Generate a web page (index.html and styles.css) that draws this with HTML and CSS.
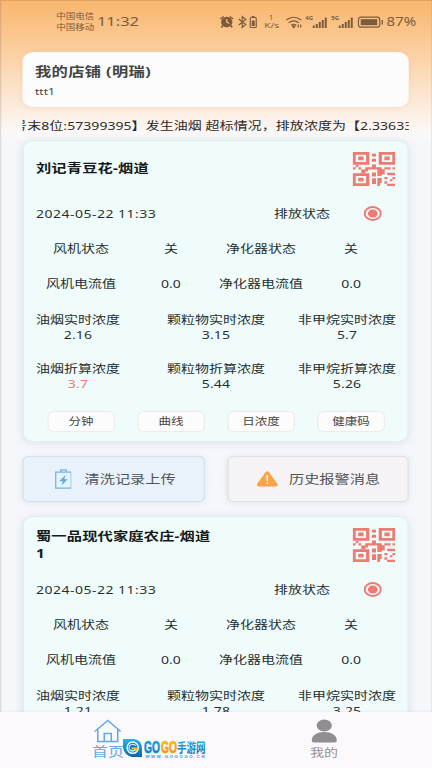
FILE: index.html
```html
<!DOCTYPE html>
<html lang="zh-CN">
<head>
<meta charset="utf-8">
<title>我的店铺</title>
<link rel="stylesheet" href="styles.css">
</head>
<body>
<svg class="defs" width="0" height="0" aria-hidden="true">
  <symbol id="qr" viewBox="0 0 128 101" preserveAspectRatio="none">
    <path fill-rule="evenodd" d="M0 0h50v38H0zM9.500 8v22h31V8zM17 13.500h16v11H17zM78 0h50v38H78zM87.500 8v22h31V8zM95 13.500h16v11H95zM0 63h50v38H0zM9.500 71v22h31V71zM17 76.500h16v11H17z"/>
    <path d="M58 5h12v8H58zM58 20h12v9H58zM58 37h12v8H58zM9 39h9v6H9zM0 45h9v7H0zM18 45h8v7h-8zM38 45h49v7H38zM95 45h18v7H95zM119 45h9v7h-9zM26 52h20v6H26zM26 58h12v5H26zM74 51h13v10H74zM87 51h9v16h-9zM58 61h12v12H58zM74 61h13v10H74zM58 78h12v17H58zM74 77h13v15h-5v9h-8v-7zM103 62h25v7h-25zM95 74h9v7h-9zM119 74h9v7h-9v6h-8v-6h8zM95 87h8v7h-8zM103 94h24v7h-24z"/>
  </symbol>
  <symbol id="radio" viewBox="0 0 18 15" preserveAspectRatio="none">
    <ellipse cx="9" cy="7.5" rx="8.1" ry="6.4" fill="none" stroke="#ee7a70" stroke-width="2"/>
    <ellipse cx="9" cy="7.5" rx="4.9" ry="4"/>
  </symbol>
</svg>

<div class="phone">
  <header class="status">
    <div class="carriers"><span>中国电信</span><span>中国移动</span></div>
    <div class="clock">11:32</div>
    <svg class="indicators" viewBox="0 0 166 18" preserveAspectRatio="none">
      <ellipse cx="8" cy="9" rx="5.7" ry="5.2"/>
      <path d="M1.500 6 5 3.500M11 3.500l3.500 2.500M4 12.500l-1.500 2M12 12.500l1.500 2" class="line"/>
      <path d="M8 6v3l2.500 1.500" class="cut"/>
      <path d="m20 6 7 5.500-3.500 3v-11l3.500 3-7 5.500" class="line thin"/>
      <rect x="31.500" y="4.500" width="6" height="10" rx="1" class="line thin"/>
      <path d="M33 3h3v1.500h-3zM33 7.500h3V13h-3z"/>
      <text x="50" y="7" font-size="8">1</text>
      <text x="45.500" y="15.500" font-size="7.500" textLength="15" lengthAdjust="spacingAndGlyphs">K/s</text>
      <path d="M67.500 7q7.500-5.500 15 0M70 9.700q5-3.800 10 0M72.500 12.200q2.500-1.800 5 0" class="line thin"/>
      <path d="M73.800 13.200h2.400l-1.200 1.600zM79.500 11.500v3M82 11.500v3" class="line thin"/>
      <text x="86.500" y="7" font-size="6" font-weight="700">4G</text>
      <path d="M94 12.500h2V15h-2zM97 11h2v4h-2zM100 9h2v6h-2zM103 7h2v8h-2zM106 4.500h2V15h-2z"/>
      <text x="112.500" y="7" font-size="6" font-weight="700">5G</text>
      <path d="M120 12.500h2V15h-2zM123 11h2v4h-2zM126 9h2v6h-2zM129 7h2v8h-2zM132 4.500h2V15h-2z"/>
      <rect x="139.700" y="4.200" width="21.300" height="10" rx="2.500" class="line thin"/>
      <rect x="142" y="6.200" width="16.500" height="6"/>
      <path d="M162.800 7h1.400v4.500h-1.400z"/>
    </svg>
    <div class="percent">87%</div>
  </header>

  <main class="content">
    <section class="shop">
      <h1>我的店铺 (明瑞)</h1>
      <p>ttt1</p>
    </section>

    <div class="marquee">号末8位:57399395】发生油烟 超标情况，排放浓度为【2.33633</div>

    <article class="card">
      <div class="head"><h2>刘记青豆花-烟道</h2><svg class="qr"><use href="#qr"/></svg></div>
      <div class="row when"><span class="date">2024-05-22 11:33</span><span>排放状态</span><svg class="radio"><use href="#radio"/></svg></div>
      <div class="row quad"><span>风机状态</span><span>关</span><span>净化器状态</span><span>关</span></div>
      <div class="row quad"><span>风机电流值</span><span>0.0</span><span>净化器电流值</span><span>0.0</span></div>
      <div class="triple">
        <div>油烟实时浓度<b>2.16</b></div><div>颗粒物实时浓度<b>3.15</b></div><div>非甲烷实时浓度<b>5.7</b></div>
      </div>
      <div class="triple">
        <div>油烟折算浓度<b class="over">3.7</b></div><div>颗粒物折算浓度<b>5.44</b></div><div>非甲烷折算浓度<b>5.26</b></div>
      </div>
      <div class="buttons"><button>分钟</button><button>曲线</button><button>日浓度</button><button>健康码</button></div>
    </article>

    <div class="links">
      <a class="link upload">
        <svg class="battery" viewBox="0 0 17 20" preserveAspectRatio="none"><path d="M.7 3.200h15.600v16H.7zM5.700 3V.800h5.600V3"/><path class="bolt" d="M10.500 6 4.200 12.300h3.600L6.600 16.500l6-6.200H9.300z"/></svg>
        <span>清洗记录上传</span>
      </a>
      <a class="link history">
        <svg class="warning" viewBox="0 0 22 16" preserveAspectRatio="none"><path d="M9.300 1.200q1.700-1.800 3.400 0l8.400 11.500q1.300 2.600-1.600 2.800h-17Q-.4 15.300.9 12.700z"/><path class="mark" d="M10 4.200h2l-.4 6h-1.200zM10.200 11.500h1.600v1.600h-1.600z"/></svg>
        <span>历史报警消息</span>
      </a>
    </div>

    <article class="card">
      <div class="head"><h2>蜀一品现代家庭农庄-烟道<br>1</h2><svg class="qr"><use href="#qr"/></svg></div>
      <div class="row when"><span class="date">2024-05-22 11:33</span><span>排放状态</span><svg class="radio"><use href="#radio"/></svg></div>
      <div class="row quad"><span>风机状态</span><span>关</span><span>净化器状态</span><span>关</span></div>
      <div class="row quad"><span>风机电流值</span><span>0.0</span><span>净化器电流值</span><span>0.0</span></div>
      <div class="triple">
        <div>油烟实时浓度<b>1.21</b></div><div>颗粒物实时浓度<b>1.78</b></div><div>非甲烷实时浓度<b>3.25</b></div>
      </div>
    </article>
  </main>

  <nav class="tabs">
    <a class="tab active">
      <svg class="house" viewBox="0 0 28 24" preserveAspectRatio="none"><path d="M1 12.500 14 1.500l13 11M4 10.500V22.500h20V10.500M10.500 22v-7.500h7V22"/></svg>
      <span>首页</span>
    </a>
    <a class="tab">
      <svg class="person" viewBox="0 0 26 24" preserveAspectRatio="none"><ellipse cx="13" cy="6.500" rx="7.600" ry="6"/><path d="M.5 21.500C.5 16 6 13 13 13s12.500 3 12.500 8.500q0 2-2 2h-21q-2 0-2-2z"/></svg>
      <span>我的</span>
    </a>
  </nav>
</div>

<svg class="watermark" viewBox="0 0 86 24">
  <defs>
    <linearGradient id="blue" x2="0" y2="1"><stop stop-color="#22b4ea"/><stop offset="1" stop-color="#0768b5"/></linearGradient>
    <linearGradient id="gold" x2="0" y2="1"><stop stop-color="#ffc91b"/><stop offset="1" stop-color="#f47a08"/></linearGradient>
  </defs>
  <path fill="url(#blue)" d="M1 2h11q8 1 8 10v8H10Q2 18 1 10z"/>
  <circle cx="10.700" cy="10.700" r="5.600" fill="#0877bd" stroke="#fff" stroke-width="1.500"/>
  <path d="M14 8.500q-4-2.500-6.500.500-1.500 4 2.500 5 3 0 4-2.500H9.500" fill="none" stroke="#bfeaff" stroke-width="1.300"/>
  <path d="M10 11.300h5l-1.500 3" fill="none" stroke="#ffb41e" stroke-width="1.800"/>
  <g class="brand">
    <text class="go" x="22" y="15.800" font-size="17" textLength="16" lengthAdjust="spacingAndGlyphs" fill="url(#blue)" stroke="#1390d3">GO</text>
    <text class="go" x="39" y="15.800" font-size="17" textLength="16" lengthAdjust="spacingAndGlyphs" fill="url(#gold)" stroke="#fba012">GO</text>
    <text x="55" y="15" font-size="13" textLength="28.500" lengthAdjust="spacingAndGlyphs" fill="url(#blue)">手游网</text>
    <text x="23.500" y="21" font-size="4.300" textLength="59" fill="#2b9ad6">WWW.GOGOGO.CN</text>
  </g>
</svg>
</body>
</html>
```
FILE: styles.css
```css
* { box-sizing: border-box; margin: 0; padding: 0; }

body {
  position: relative;
  width: 432px;
  height: 768px;
  overflow: hidden;
  background: #f6f7fb;
}

.defs { display: block; height: 0; }

/* The handset screen is laid out narrow and widened to the window. */
.phone {
  display: flex;
  flex-direction: column;
  width: 345.6px;
  height: 768px;
  transform: scaleX(1.25);
  transform-origin: 0 0;
  background: linear-gradient(#f9b66e 0, #fbc68e 35px, #fbdcbb 75px, #fcf0e5 115px, #faf9f9 134px, #f6f7fb 142px);
  box-shadow: inset 1px 1px 0 rgba(90, 80, 80, .18), inset -1px -1px 0 rgba(90, 80, 80, .12);
  font: 11.2px/15px "Noto Sans", "Noto Sans CJK SC", sans-serif;
  color: #27302f;
}

.status {
  display: flex;
  align-items: center;
  flex: none;
  height: 43px;
  padding-left: 45px;
  color: #7d5b3b;
}
.carriers { display: flex; flex-direction: column; width: 32.500px; font-size: 7.6px; line-height: 10.5px; }
.clock { width: 97.500px; font-size: 13.2px; }
.indicators { width: 132.8px; height: 18px; fill: #7d5b3b; overflow: visible; }
.indicators .line { fill: none; stroke: #7d5b3b; stroke-width: 1.5; }
.indicators .thin { stroke-width: 1.2; }
.indicators .cut { fill: none; stroke: #f9c58d; stroke-width: 1.2; }
.percent { margin-left: 1.5px; font-size: 12px; }

.content { flex: 1; min-height: 0; overflow: hidden; padding: 9px 18.4px 0; }

.shop {
  height: 55px;
  padding: 10px 9.6px 0;
  border-radius: 9px;
  background: #fcfcfc;
  box-shadow: 0 1px 5px rgba(200, 130, 70, .13);
  color: #454545;
}
.shop h1 { font-size: 13px; line-height: 18px; letter-spacing: .3px; }
.shop p { margin-top: 5px; font-size: 9.6px; line-height: 13px; }

.marquee {
  height: 32.500px;
  padding-top: 11px;
  overflow: hidden;
  white-space: nowrap;
  text-indent: -8.300px;
  letter-spacing: .05px;
  color: #2c2927;
}

.card {
  height: 302px;
  padding: 0 9.4px;
  border: 1px solid #e0eeee;
  border-radius: 9px;
  background: #effcfb;
  box-shadow: 0 1px 8px rgba(90, 110, 140, .16);
}
.head { display: flex; align-items: center; justify-content: space-between; height: 56px; }
.head h2 { font-size: 12.2px; line-height: 17px; letter-spacing: .13px; color: #151b1b; }
.qr { width: 34.4px; height: 34px; margin-right: .8px; fill: #ee7a70; }

.row { height: 35px; padding-bottom: 1.500px; align-items: center; border-top: 1px solid #f6faf8; }
.when { display: flex; }
.date { flex: 1; letter-spacing: .4px; }
.radio { width: 14.4px; height: 15px; margin: 0 11.2px 1.500px 27.2px; fill: #ee7a70; }
.quad { display: grid; grid-template-columns: repeat(4, 1fr); text-align: center; white-space: nowrap; }
.quad span { justify-self: center; }

.triple {
  display: grid;
  grid-template-columns: 1fr auto 1fr;
  height: 49.700px;
  padding-top: 9.200px;
  border-top: 1px solid #f6faf8;
  text-align: center;
}
.triple div:first-child { justify-self: start; }
.triple div:last-child { justify-self: end; }
.triple b { display: block; font-weight: 400; letter-spacing: .15px; }
.triple .over { color: #ee7a70; }

.buttons {
  display: flex;
  justify-content: space-around;
  padding-top: 9px;
  border-top: 1px solid #f6faf8;
}
.buttons button {
  width: 54px;
  height: 21px;
  border: 1px solid #ececec;
  border-radius: 5px;
  background: #fcfcfc;
  font: 10px/18px "Noto Sans", "Noto Sans CJK SC", sans-serif;
  color: #444;
}

.links { display: flex; justify-content: space-between; padding: 14px 0; }
.link {
  display: flex;
  align-items: center;
  width: 145.6px;
  height: 46px;
  padding-left: 24.5px;
  border: 1px solid #d2e3ec;
  border-radius: 5px;
  background: #e9f2fb;
  box-shadow: 0 1px 7px rgba(90, 110, 140, .13);
  font-size: 12.15px;
  color: #505457;
}
.link span { padding-top: 1.500px; }
.battery { width: 13.6px; height: 20px; margin-right: 10.200px; fill: none; stroke: #70b5ed; stroke-width: 1.300; }
.battery .bolt { fill: #58a9ea; stroke: none; }
.history { padding-left: 22.5px; border-color: #e4e0e3; background: #f6f3f6; }
.warning { width: 17.6px; height: 16px; margin-right: 8.5px; fill: #f9a247; }
.warning .mark { fill: #fff; }

.tabs { display: flex; flex: none; height: 56px; background: #fbf9fc; box-shadow: 0 -1px 2px rgba(80, 80, 100, .05); }
.tab {
  display: flex;
  flex-direction: column;
  align-items: center;
  flex: 1;
  padding-top: 7px;
  color: #969295;
}
.tab span { margin-top: 2px; font-size: 11.2px; line-height: 16px; }
.tab.active span { margin-top: 0; font-size: 12.8px; color: #66a8e4; }
.house { width: 22.4px; height: 24px; fill: none; stroke: #5fa8ea; stroke-width: 1.5; }
.person { width: 20.8px; height: 24px; fill: #918d91; }

.watermark { position: absolute; left: 122px; top: 737px; width: 86px; height: 24px; }
.brand { font-family: "Liberation Sans", "Noto Sans CJK SC", sans-serif; font-weight: 700; }
.go { stroke-width: .7; }
```
